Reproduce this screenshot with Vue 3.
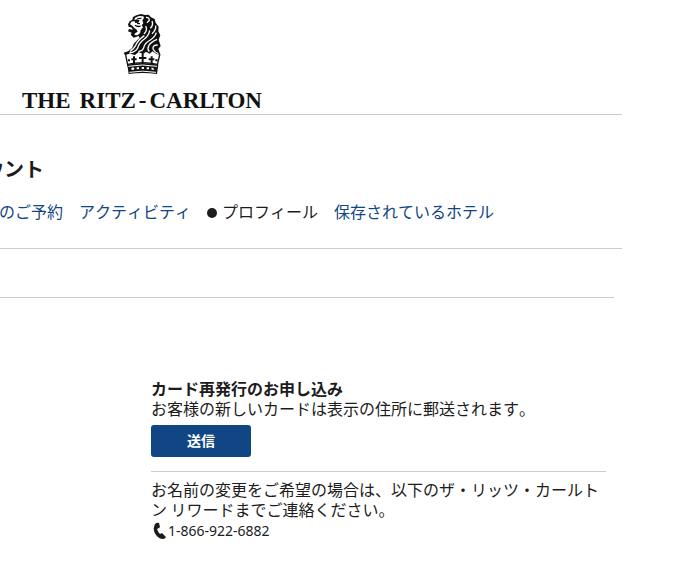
<script setup>
const links = [
  { label: 'のご予約' },
  { label: 'アクティビティ' },
  { label: 'プロフィール', current: true },
  { label: '保存されているホテル' },
]
</script>

<template>
  <div class="page">
    <header class="masthead">
      <a class="brand" href="#" aria-label="THE RITZ-CARLTON">
        <svg class="crest" viewBox="36 27 114 180" aria-hidden="true">
          <path fill="#111" d="M51 58 56 49 64 44 66 36 76 31 90 27 102 30 113 29 120 37 131 42 134 53 143 65 142 79 148 91 143 104 149 123 142 132 149 151 135 146 125 139 116 146 105 140 96 148 83 141 72 150 57 146 42 151 38 143 51 139 63 130 68 117 76 108 86 99 83 93 68 98 59 89 62 83 51 79 54 72 65 74 63 68 53 65Z" />
          <path fill="#fff" d="M57 58 61 50 70 48 73 54 82 53 86 46 76 43 70 46 72 38 84 33 97 34 99 39 94 46 97 55 92 61 96 67 89 76 87 85 79 91 70 90 73 84 80 80 77 74 70 69 65 63Z" />
          <path fill="none" stroke="#111" stroke-width="4" d="M72 61Q80 67 89 63M79 41 91 40M78 55 87 56" />
          <path fill="none" stroke="#fff" stroke-width="4" d="M105 37Q115 36 115 46L108 53M123 48Q128 60 118 70M104 63Q111 76 99 87M134 62Q136 75 123 86M116 76Q114 91 100 102Q84 114 80 129Q74 141 55 144M136 83Q132 96 118 105Q101 114 98 128Q94 139 82 139M100 92Q80 106 74 121Q68 133 57 139M138 103Q116 113 113 123Q108 132 115 140M140 120Q124 120 126 132Q132 143 142 146" />
          <path fill="#fff" d="M40 151 55 148 70 153 88 145 99 153 113 146 128 150 147 154 142 164 47 164Z" />
          <path fill="none" stroke="#111" stroke-width="4" d="M44 150 51 184M146 150 138 184M50 178Q94 168 140 178" />
          <path fill="none" stroke="#111" stroke-width="6" d="M95 147V176M84 159H106M69 154V177M61 163H77M122 154V177M113 163H130M51 166H57M133 166H140" />
          <path fill="#111" d="M49 179Q94 169 142 179L138 207Q94 201 53 207Z" />
          <path fill="none" stroke="#fff" stroke-width="3" d="M52 184Q94 176 138 184M55 202Q94 195 135 202" />
          <path fill="#fff" d="M61 189 67 187 71 191 67 195 61 194ZM77 187H84V193H77ZM92 186H99V192H92ZM107 187H114V193H107ZM121 188 127 189 130 194 122 194Z" />
        </svg>
        <span class="wordmark">
          <span class="the">THE</span><span>RITZ</span><span>-</span><span>CARLTON</span>
        </span>
      </a>
    </header>

    <main>
      <section class="account">
        <h1>ウント</h1>
        <nav class="tabs">
          <a v-for="link in links" :key="link.label" href="#" :class="{ current: link.current }" :aria-current="link.current ? 'page' : undefined">{{ link.label }}</a>
        </nav>
      </section>
      <div class="separator"></div>
      <section class="details">
        <h2>カード再発行のお申し込み</h2>
        <p>お客様の新しいカードは表示の住所に郵送されます。</p>
        <button type="button">送信</button>
        <div class="contact">
          <p>お名前の変更をご希望の場合は、以下のザ・リッツ・カールトン リワードまでご連絡ください。</p>
          <a class="phone" href="tel:1-866-922-6882">
            <svg viewBox="0 0 14 18" aria-hidden="true"><path fill="#1c1c1c" d="M2 2Q4 0 6 1L7 5 6 6 4 7Q5 10 7 12L9 11 13 15Q12 17 10 17 6 17 3 13 0 9 1 5Z" /></svg>
            <span>1-866-922-6882</span>
          </a>
        </div>
      </section>
    </main>
  </div>
</template>

<style>
body {
  background: #fff;
  overflow-x: hidden;
}
</style>

<style scoped>
.page {
  margin-right: 56px;
  color: #1c1c1c;
  font: 16px/20px "Noto Sans CJK JP", sans-serif;
  font-kerning: none;
}
a {
  color: #114685;
  text-decoration: none;
}
h1, h2, p {
  margin: 0;
}
.masthead {
  display: flex;
  padding: 14px 0 0 22px;
  border-bottom: 1px solid #ccc;
}
.brand {
  display: flex;
  flex-direction: column;
  align-items: center;
  color: #111;
}
.crest {
  display: block;
  width: 38px;
  height: 60px;
}
.wordmark {
  display: flex;
  gap: 3px;
  margin-top: 14px;
  padding-bottom: 1px;
  font: bold 23px/25px "Liberation Serif", serif;
}
.the {
  margin-right: 6px;
}
.account {
  padding: 42px 0 25px;
  border-bottom: 1px solid #ccc;
}
h1 {
  margin-left: -16px;
  font-size: 20px;
  line-height: 24px;
}
.tabs {
  display: flex;
  gap: 16px;
  margin: 19px 0 0 -1px;
  line-height: 23px;
  white-space: nowrap;
}
.current {
  display: flex;
  align-items: center;
  gap: 5px;
  color: #1c1c1c;
}
.current::before {
  content: "";
  width: 10px;
  height: 10px;
  margin-top: 2px;
  border-radius: 50%;
  background: #1c1c1c;
}
.separator {
  margin: 48px 8px 0 0;
  border-bottom: 1px solid #ccc;
}
.details {
  padding: 80px 16px 40px 151px;
}
h2 {
  font-size: 16px;
  line-height: 20px;
}
button {
  display: block;
  width: 100px;
  height: 32px;
  margin-top: 7px;
  padding: 0 0 2px;
  border: 0;
  border-radius: 3px;
  background: #114685;
  color: #fff;
  font: bold 14px/20px "Noto Sans CJK JP", sans-serif;
}
.contact {
  margin-top: 14px;
  padding-top: 7px;
  border-top: 1px solid #ccc;
}
.phone {
  display: flex;
  align-items: center;
  gap: 1px;
  margin-top: 1px;
  padding-left: 2px;
  color: #1c1c1c;
  font: 14px/22px "Noto Sans", sans-serif;
}
.phone svg {
  width: 14px;
  height: 18px;
}
</style>
